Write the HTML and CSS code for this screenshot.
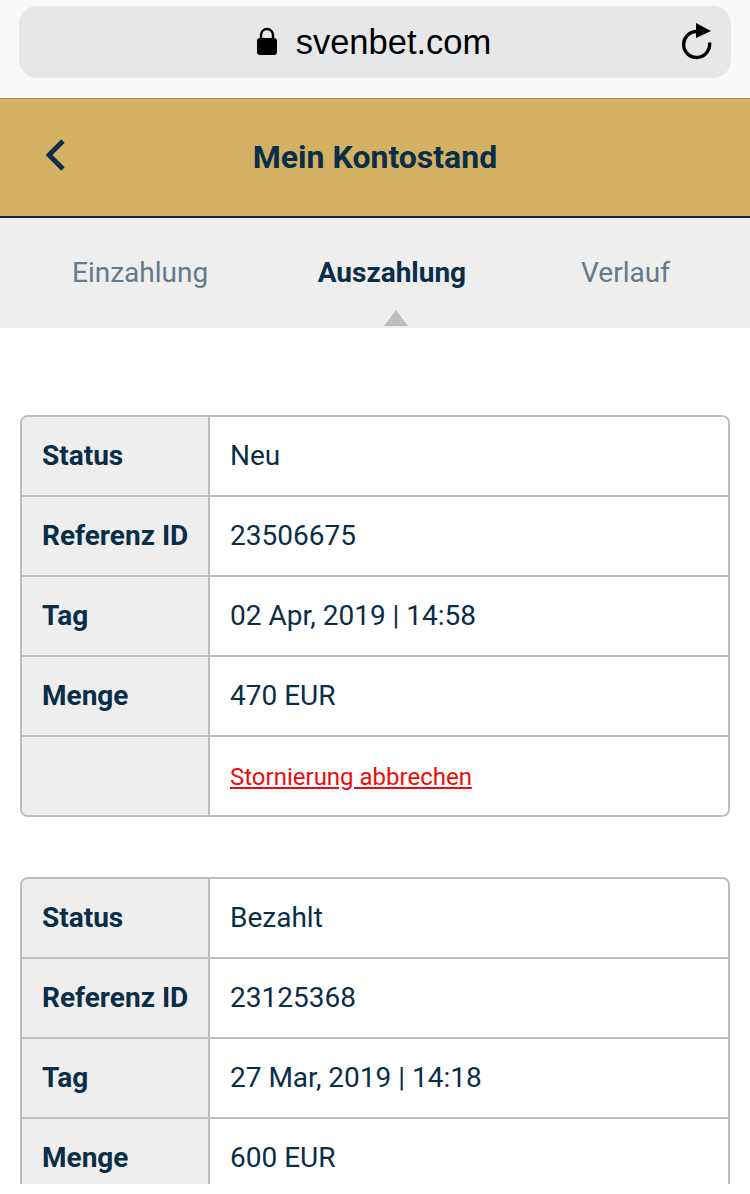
FILE: index.html
```html
<!DOCTYPE html>
<html lang="de">
<head>
<meta charset="utf-8">
<title>Mein Kontostand</title>
<link rel="stylesheet" href="styles.css">
</head>
<body>
<div class="page">
<div class="browser">
  <div class="address">
    <svg class="lock" width="20" height="28" viewBox="0 0 20 28"><path d="M4 13V8a6 6 0 0 1 12 0v5" fill="none" stroke="#000" stroke-width="2.4"/><rect x="0" y="11" width="20" height="17" rx="3" fill="#000"/></svg>
    <span class="url">svenbet.com</span>
    <svg class="reload" width="32" height="38" viewBox="0 0 32 38"><path d="M27.5 19.5 A 13 13 0 1 1 14 8.5" fill="none" stroke="#000" stroke-width="3.4"/><path d="M14 0 L29 8 L14 15 Z" fill="#000"/></svg>
  </div>
</div>
<header class="topbar">
  <svg class="back" width="22" height="34" viewBox="0 0 22 34"><path d="M19 3 L5 17 L19 31" fill="none" stroke="#0a2d48" stroke-width="4.8"/></svg>
  <h1 class="title">Mein Kontostand</h1>
</header>
<nav class="tabs">
  <span class="tab">Einzahlung</span>
  <span class="tab active">Auszahlung</span>
  <span class="tab last">Verlauf</span>
  <span class="caret"></span>
</nav>
<main class="content">
  <section class="record">
    <div class="row"><div class="label">Status</div><div class="value">Neu</div></div>
    <div class="row"><div class="label">Referenz ID</div><div class="value">23506675</div></div>
    <div class="row"><div class="label">Tag</div><div class="value">02 Apr, 2019 | 14:58</div></div>
    <div class="row"><div class="label">Menge</div><div class="value">470 EUR</div></div>
    <div class="row"><div class="label"></div><div class="value"><a class="cancel" href="#">Stornierung abbrechen</a></div></div>
  </section>
  <section class="record">
    <div class="row"><div class="label">Status</div><div class="value">Bezahlt</div></div>
    <div class="row"><div class="label">Referenz ID</div><div class="value">23125368</div></div>
    <div class="row"><div class="label">Tag</div><div class="value">27 Mar, 2019 | 14:18</div></div>
    <div class="row"><div class="label">Menge</div><div class="value">600 EUR</div></div>
  </section>
</main>
</div>
</body>
</html>
```
FILE: styles.css
```css
* { box-sizing: border-box; }
html, body { margin: 0; padding: 0; background: #fff; }
body { font-family: Roboto, "Liberation Sans", sans-serif; color: #0a2d48; }
.page { height: 1184px; overflow: hidden; }

.browser { height: 98px; background: #f9f9f9; padding: 6px 19px 0; }
.address { position: relative; height: 72px; border-radius: 18px; background: #e6e7e9; display: flex; align-items: center; justify-content: center; }
.lock { margin-right: 19px; margin-top: -2px; margin-left: -2px; }
.url { font-family: "Liberation Sans", Arial, sans-serif; font-size: 34.5px; color: #000; margin-top: 1px; }
.reload { position: absolute; right: 17px; top: 17px; }

.topbar { position: relative; height: 120px; background: #d4b063; border-top: 1px solid #a88c4e; border-bottom: 2px solid #0e2a3c; display: flex; align-items: center; justify-content: center; }
.back { position: absolute; left: 44px; top: 39px; }
.title { margin: 0; font-size: 32px; font-weight: 700; color: #0a2d48; position: relative; top: -1px; }

.tabs { position: relative; height: 110px; background: #eeeeee; display: flex; align-items: center; padding: 0 0 2px 72px; font-size: 28px; color: #64798a; }
.tab { margin-right: 109.5px; }
.tab.active { font-weight: 700; color: #0a2d48; }
.tab.last { margin-left: 5.5px; margin-right: 0; }
.caret { position: absolute; left: 384px; bottom: 2px; width: 0; height: 0; border-left: 12px solid transparent; border-right: 12px solid transparent; border-bottom: 16px solid #bdbdbd; }

.content { padding: 87px 20px 0; }
.record { border: 2px solid #bdbdbd; border-radius: 8px; overflow: hidden; margin-bottom: 60px; }
.row { display: flex; height: 80px; border-top: 2px solid #bdbdbd; font-size: 28px; }
.row:first-child { height: 78px; border-top: 0; }
.label { width: 188px; flex: none; background: #eeeeee; border-right: 2px solid #bdbdbd; font-weight: 700; padding: 0 0 2px 20px; display: flex; align-items: center; }
.value { flex: 1; padding: 0 0 2px 20px; display: flex; align-items: center; background: #fff; }
.cancel { color: #ee0a0a; font-size: 24px; text-decoration: underline; position: relative; top: 2px; }
```
